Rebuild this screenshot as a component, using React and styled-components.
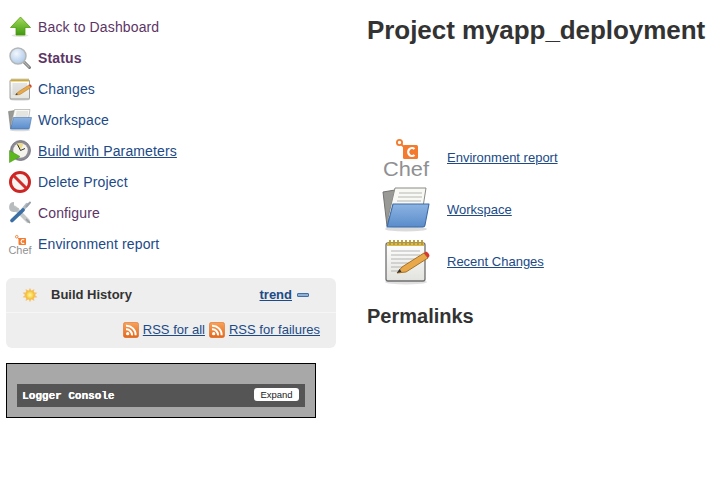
import React from "react";
import styled, { createGlobalStyle } from "styled-components";

const GlobalStyle = createGlobalStyle`
  html, body {
    margin: 0;
    padding: 0;
    background: #fff;
    font-family: "Liberation Sans", Arial, sans-serif;
    color: #333;
  }
`;

const tasks = [
  { icon: "up", label: "Back to Dashboard", visited: true },
  { icon: "search", label: "Status", visited: true, bold: true },
  { icon: "notepad", label: "Changes" },
  { icon: "folder", label: "Workspace" },
  { icon: "clock", label: "Build with Parameters", underline: true },
  { icon: "nogo", label: "Delete Project" },
  { icon: "wrench", label: "Configure", visited: true },
  { icon: "chef", label: "Environment report" },
];

const mainLinks = [
  { icon: "chef", label: "Environment report" },
  { icon: "folder", label: "Workspace" },
  { icon: "notepad", label: "Recent Changes" },
];

function Defs() {
  return (
    <svg width="0" height="0" style={{ position: "absolute" }}>
      <defs>
        <linearGradient id="gUp" x1="0" y1="0" x2="0" y2="1">
          <stop offset="0" stopColor="#a5dc5a" />
          <stop offset="1" stopColor="#3f9a12" />
        </linearGradient>
        <linearGradient id="gFolder" x1="0" y1="0" x2="0" y2="1">
          <stop offset="0" stopColor="#8db4e2" />
          <stop offset="1" stopColor="#5a8ccb" />
        </linearGradient>
        <linearGradient id="gPaper" x1="0" y1="0" x2="0" y2="1">
          <stop offset="0" stopColor="#fff" />
          <stop offset="1" stopColor="#e2e2de" />
        </linearGradient>
        <radialGradient id="gLens" cx="0.4" cy="0.35" r="0.7">
          <stop offset="0" stopColor="#f2f7fd" />
          <stop offset="1" stopColor="#a9c6e8" />
        </radialGradient>
        <radialGradient id="gSun" cx="0.5" cy="0.5" r="0.5">
          <stop offset="0" stopColor="#fff7a0" />
          <stop offset="1" stopColor="#f4c430" />
        </radialGradient>
        <linearGradient id="gRss" x1="0" y1="0" x2="0" y2="1">
          <stop offset="0" stopColor="#f7a35c" />
          <stop offset="1" stopColor="#e4671b" />
        </linearGradient>
      </defs>
    </svg>
  );
}

function Icon({ name, size = 24 }) {
  return (
    <svg width={size} height={size} viewBox="0 0 48 48" aria-hidden="true">
      {glyphs[name]}
    </svg>
  );
}

const glyphs = {
  up: (
    <>
      <ellipse cx="24" cy="41" rx="17" ry="3" fill="#000" opacity="0.12" />
      <path d="M25 4 L45 25 H34 V40 H16 V25 H5 Z" fill="url(#gUp)" stroke="#4e9a06" strokeWidth="1.5" strokeLinejoin="round" />
    </>
  ),
  search: (
    <>
      <path d="M30 30 L43 43" stroke="#777" strokeWidth="6" strokeLinecap="round" />
      <path d="M30 30 L42 42" stroke="#b5b5b5" strokeWidth="2.5" strokeLinecap="round" />
      <circle cx="20" cy="20" r="16" fill="url(#gLens)" stroke="#b4b6b4" strokeWidth="3" />
    </>
  ),
  notepad: (
    <>
      <ellipse cx="24" cy="45" rx="21" ry="2.500" fill="#000" opacity="0.12" />
      <rect x="4" y="6" width="39" height="38" rx="2" fill="url(#gPaper)" stroke="#6f6f6f" strokeWidth="1.3" />
      <rect x="5" y="6" width="37" height="3" fill="#d9b84a" />
      <path d="M8 3v5M12 3v5M16 3v5M20 3v5M24 3v5M28 3v5M32 3v5M36 3v5M40 3v5" stroke="#b8972a" strokeWidth="1.8" />
      <path d="M9 14H38M9 18H38M9 22H38M9 26H28M9 30H20M9 34H16" stroke="#b4b4b4" strokeWidth="1.2" />
      <path d="M20 30 L42 16 L46 21 L24 35 L15 36 Z" fill="#e9a94a" stroke="#9c6a1e" strokeWidth="0.9" strokeLinejoin="round" />
      <path d="M42 16 L46 21 L47.500 19 Q47 15.500 44 14.500 Z" fill="#d8392b" />
      <path d="M15 36 L17.500 32 L19.500 34.800 Z" fill="#333" />
    </>
  ),
  folder: (
    <>
      <ellipse cx="24" cy="44" rx="21" ry="2.500" fill="#000" opacity="0.14" />
      <path d="M1 7 L13 5 V30 L5 41 Z" fill="#999996" stroke="#737371" strokeWidth="1" />
      <path d="M6 33 L13 3 H44 L41 22 L10 40 Z" fill="#f8f8f5" stroke="#8a8a86" strokeWidth="1" />
      <path d="M17 8H40M16 12H40M15 16H39" stroke="#b5b5b2" strokeWidth="1.2" />
      <path d="M11 19 H47 L43 40 Q42.500 42 41 42 H5 Z" fill="url(#gFolder)" stroke="#3d6ca6" strokeWidth="1.1" strokeLinejoin="round" />
    </>
  ),
  clock: (
    <>
      <circle cx="25" cy="23" r="20" fill="#8d8b96" stroke="#6a6873" strokeWidth="1.5" />
      <circle cx="25" cy="23" r="14.500" fill="#f4f3ec" />
      <path d="M25 23 L17 10 A14.500 14.500 0 0 1 31 10 Z" fill="#ecdc8c" />
      <path d="M25 23 L19 11 M25 23 L34 19" stroke="#333" strokeWidth="2" />
      <path d="M3 23 L24 35 L3 47 Z" fill="#5bb91e" stroke="#3d8c0e" strokeWidth="1" strokeLinejoin="round" />
    </>
  ),
  nogo: (
    <>
      <circle cx="24" cy="24" r="19" fill="#f7f3f1" stroke="#cc2523" strokeWidth="6" />
      <path d="M11 11 L37 37" stroke="#d42b28" strokeWidth="6" />
    </>
  ),
  wrench: (
    <>
      <path d="M38 7 L30 17" stroke="#b4bcc2" strokeWidth="7" strokeLinecap="round" />
      <path d="M44 3 L37 11" stroke="#98a2aa" strokeWidth="4" strokeLinecap="round" />
      <path d="M13 13 L40 40" stroke="#c6c9c9" strokeWidth="8" strokeLinecap="round" />
      <path d="M12 2 A10 10 0 1 0 22 14 L15 13 L12 9 Z" fill="#b9bcbe" />
      <path d="M30 18 L8 39" stroke="#3a6ea5" strokeWidth="7.500" strokeLinecap="round" />
      <path d="M37 37 L43 43" stroke="#9a9e9f" strokeWidth="3.500" strokeLinecap="round" />
    </>
  ),
  chef: (
    <>
      <circle cx="17.500" cy="9.500" r="2.600" fill="none" stroke="#f47a2e" strokeWidth="1.8" />
      <path d="M19.500 11.500 L23 15" stroke="#f47a2e" strokeWidth="1.8" />
      <rect x="21" y="12" width="15" height="14" rx="1.500" fill="#f47a2e" />
      <path d="M32.500 16 A3.800 4 0 1 0 32.500 22" fill="none" stroke="#fff" strokeWidth="2.2" />
      <text x="1" y="43" textLength="46" lengthAdjust="spacingAndGlyphs" fontFamily="'Liberation Sans', Arial, sans-serif" fontSize="20" fill="#8f9092">Chef</text>
    </>
  ),
  sun: (
    <>
      <path d="M24 2 L28 11 L37 6 L36 16 L46 17 L39 24 L46 31 L36 32 L37 42 L28 37 L24 46 L20 37 L11 42 L12 32 L2 31 L9 24 L2 17 L12 16 L11 6 L20 11 Z" fill="#f7bf6a" />
      <circle cx="24" cy="24" r="12.500" fill="url(#gSun)" stroke="#eeb22e" strokeWidth="1" />
    </>
  ),
  rss: (
    <>
      <rect x="1" y="1" width="46" height="46" rx="7" fill="url(#gRss)" stroke="#d5641b" strokeWidth="1.5" />
      <circle cx="14" cy="35" r="5" fill="#fff" />
      <path d="M9 22 A17 17 0 0 1 27 40" fill="none" stroke="#fff" strokeWidth="6" />
      <path d="M9 11 A28 28 0 0 1 38 40" fill="none" stroke="#fff" strokeWidth="6" />
    </>
  ),
};

export default function App() {
  return (
    <Page>
      <GlobalStyle />
      <Defs />
      <SidePanel>
        <Tasks>
          {tasks.map((task) => (
            <Task key={task.label}>
              <Icon name={task.icon} />
              <TaskLink $visited={task.visited} $bold={task.bold} $underline={task.underline}>
                {task.label}
              </TaskLink>
            </Task>
          ))}
        </Tasks>

        <HistoryBox>
          <HistoryHead>
            <Icon name="sun" size={16} />
            <HistoryTitle>Build History</HistoryTitle>
            <TrendLink>trend</TrendLink>
            <Collapse />
          </HistoryHead>
          <HistoryFeeds>
            <Icon name="rss" size={16} />
            <FeedLink>RSS for all</FeedLink>
            <Icon name="rss" size={16} />
            <FeedLink>RSS for failures</FeedLink>
          </HistoryFeeds>
        </HistoryBox>

        <LoggerBox>
          <LoggerBar>
            <LoggerTitle>Logger Console</LoggerTitle>
            <ExpandButton>Expand</ExpandButton>
          </LoggerBar>
        </LoggerBox>
      </SidePanel>

      <Main>
        <Title>Project myapp_deployment</Title>
        <MainLinks>
          {mainLinks.map((item) => (
            <MainLink key={item.label}>
              <Icon name={item.icon} size={48} />
              <LinkText>{item.label}</LinkText>
            </MainLink>
          ))}
        </MainLinks>
        <SubTitle>Permalinks</SubTitle>
      </Main>
    </Page>
  );
}

const Page = styled.div`
  display: flex;
  width: 721px;
  height: 478px;
  overflow: hidden;
`;

const SidePanel = styled.div`
  width: 330px;
  margin-left: 6px;
  flex: none;
`;

const Tasks = styled.div`
  padding-top: 11px;
  margin-bottom: 19px;
`;

const Task = styled.div`
  display: flex;
  align-items: center;
  gap: 6px;
  height: 31px;
  padding-left: 2px;
`;

const TaskLink = styled.a`
  font-size: 14px;
  letter-spacing: 0.13px;
  color: ${(props) => (props.$visited ? "#5c3566" : "#204a87")};
  font-weight: ${(props) => (props.$bold ? "bold" : "normal")};
  text-decoration: ${(props) => (props.$underline ? "underline" : "none")};
`;

const HistoryBox = styled.div`
  background: #eee;
  border-radius: 6px;
  height: 70px;
`;

const HistoryHead = styled.div`
  display: flex;
  align-items: center;
  height: 35px;
  padding: 0 0 1px 16px;
  border-bottom: 1px solid #f6f6f6;
  box-sizing: border-box;
`;

const HistoryTitle = styled.span`
  margin-left: 13px;
  font-size: 13px;
  font-weight: bold;
  color: #333;
`;

const TrendLink = styled.a`
  margin-left: auto;
  font-size: 13px;
  font-weight: bold;
  color: #204a87;
  text-decoration: underline;
`;

const Collapse = styled.span`
  width: 10px;
  height: 2px;
  margin: 1px 27px 0 5px;
  background: #8fb0d6;
  border: 1px solid #3f6ea8;
  border-radius: 1px;
`;

const HistoryFeeds = styled.div`
  display: flex;
  align-items: center;
  justify-content: flex-end;
  height: 33px;
  padding-right: 16px;
  gap: 4px;
`;

const FeedLink = styled.a`
  font-size: 13px;
  color: #204a87;
  text-decoration: underline;
`;

const LoggerBox = styled.div`
  box-sizing: border-box;
  width: 310px;
  height: 55px;
  margin-top: 15px;
  padding: 20px 10px 0;
  background: #a8a8a8;
  border: 1px solid #000;
`;

const LoggerBar = styled.div`
  display: flex;
  align-items: center;
  justify-content: space-between;
  height: 23px;
  padding: 0 6px 0 5px;
  background: #555;
`;

const LoggerTitle = styled.span`
  font-family: "Liberation Mono", "Courier New", monospace;
  font-size: 11px;
  font-weight: bold;
  color: #fff;
  text-shadow: 0.3px 0 0 #fff;
`;

const ExpandButton = styled.span`
  width: 45px;
  height: 13px;
  margin-top: -2px;
  border-radius: 3px;
  background: #fff;
  color: #222;
  font-size: 9.500px;
  line-height: 13px;
  text-align: center;
`;

const Main = styled.div`
  flex: 1;
  margin-left: 31px;
`;

const Title = styled.h1`
  margin: 15px 0 0;
  font-size: 26px;
  line-height: 30px;
  font-weight: bold;
  letter-spacing: -0.06px;
  color: #333;
  white-space: nowrap;
`;

const MainLinks = styled.div`
  margin: 86px 0 0 15px;
`;

const MainLink = styled.div`
  display: flex;
  align-items: center;
  gap: 17px;
  height: 52px;
`;

const LinkText = styled.a`
  font-size: 13px;
  color: #204a87;
  text-decoration: underline;
`;

const SubTitle = styled.h2`
  margin: 17px 0 0;
  font-size: 20px;
  line-height: 24px;
  font-weight: bold;
  color: #333;
`;
